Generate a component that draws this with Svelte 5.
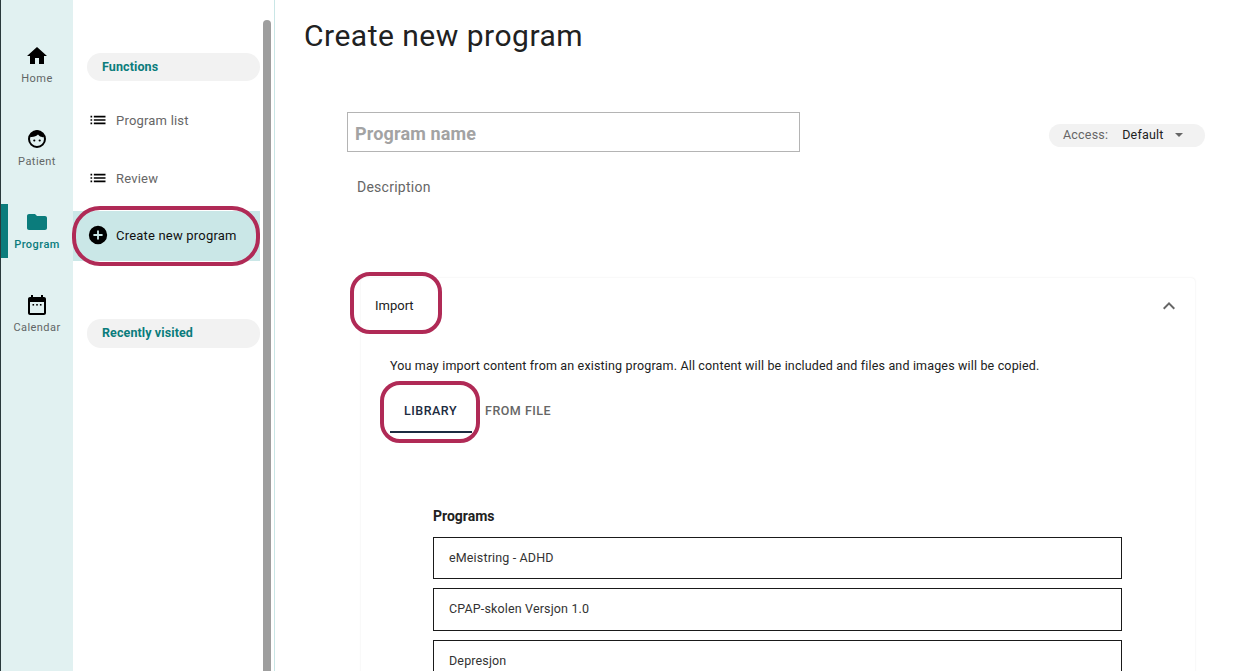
<script>
  const railItems = [
    { label: "Home", icon: "home" },
    { label: "Patient", icon: "face" },
    { label: "Program", icon: "folder", active: true },
    { label: "Calendar", icon: "calendar" }
  ];

  const programs = ["eMeistring - ADHD", "CPAP-skolen Versjon 1.0", "Depresjon"];
</script>

<div class="app">
  <nav class="rail">
    {#each railItems as item}
      <div class="rail-item" class:active={item.active}>
        <svg class="rail-icon" viewBox="0 0 24 24" width="24" height="24" fill="currentColor">
          {#if item.icon === "home"}
            <path d="M10 20v-6h4v6h5v-8h3L12 3 2 12h3v8z" />
          {:else if item.icon === "face"}
            <circle cx="12" cy="12" r="8" fill="none" stroke="currentColor" stroke-width="2" />
            <path d="M5 10C6 6 9 3.500 12 3.500s6 2.500 7 6.500c-2.500.5-4.500-.4-6-2.400C11.500 9.400 8 10.500 5 10z" />
            <circle cx="9.300" cy="13.500" r="1.100" />
            <circle cx="14.700" cy="13.500" r="1.100" />
          {:else if item.icon === "folder"}
            <path d="M10 4H4c-1.100 0-2 .9-2 2v12c0 1.100.9 2 2 2h16c1.100 0 2-.9 2-2V8c0-1.100-.9-2-2-2h-8z" />
          {:else}
            <path fill-rule="evenodd" d="M19 4h-1V2h-2v2H8V2H6v2H5c-1.100 0-2 .9-2 2v14c0 1.100.9 2 2 2h14c1.100 0 2-.9 2-2V6c0-1.100-.9-2-2-2zm0 16H5V9h14z" />
            <rect x="7.500" y="11" width="1.600" height="1.600" />
            <rect x="11.200" y="11" width="1.600" height="1.600" />
            <rect x="14.900" y="11" width="1.600" height="1.600" />
          {/if}
        </svg>
        <span>{item.label}</span>
      </div>
    {/each}
  </nav>

  <aside class="sidebar">
    <div class="pill-head">Functions</div>
    <div class="side-row first">
      <svg viewBox="0 0 24 24" width="20" height="20" fill="currentColor"><path d="M3 13h2v-2H3zm0 4h2v-2H3zm0-8h2V7H3zm4 4h14v-2H7zm0 4h14v-2H7zM7 7v2h14V7z" /></svg>
      <span>Program list</span>
    </div>
    <div class="side-row second">
      <svg viewBox="0 0 24 24" width="20" height="20" fill="currentColor"><path d="M3 13h2v-2H3zm0 4h2v-2H3zm0-8h2V7H3zm4 4h14v-2H7zm0 4h14v-2H7zM7 7v2h14V7z" /></svg>
      <span>Review</span>
    </div>
    <div class="side-row current">
      <svg viewBox="0 0 24 24" width="22" height="22" fill="currentColor"><path d="M12 2a10 10 0 1 0 0 20 10 10 0 0 0 0-20zm5 11h-4v4h-2v-4H7v-2h4V7h2v4h4z" /></svg>
      <span>Create new program</span>
    </div>
    <div class="pill-head recent">Recently visited</div>
    <div class="scrollbar"></div>
  </aside>

  <main class="main">
    <h1>Create new program</h1>

    <div class="form-top">
      <div class="name-input">Program name</div>
      <div class="access">
        <span class="access-label">Access:</span>
        <span class="access-value">Default</span>
        <span class="caret"></span>
      </div>
    </div>

    <div class="description">Description</div>

    <section class="card">
      <div class="card-head">
        <span class="card-title">Import</span>
        <svg viewBox="0 0 24 24" width="24" height="24" fill="#666"><path d="M12 8l-6 6 1.410 1.410L12 10.830l4.590 4.580L18 14z" /></svg>
      </div>
      <p class="hint">You may import content from an existing program. All content will be included and files and images will be copied.</p>
      <div class="tabs">
        <div class="tab selected">LIBRARY</div>
        <div class="tab">FROM FILE</div>
      </div>
      <div class="programs">
        <h2>Programs</h2>
        {#each programs as program}
          <div class="program-row">{program}</div>
        {/each}
      </div>
    </section>
  </main>

  <div class="mark mark-create"></div>
  <div class="mark mark-import"></div>
  <div class="mark mark-library"></div>
</div>

<style>
  :global(body) {
    margin: 0;
    background: #fff;
    overflow: hidden;
  }

  .app {
    position: relative;
    display: flex;
    height: 671px;
    overflow: hidden;
    font-family: Roboto, "Liberation Sans", sans-serif;
    color: #212121;
  }

  .rail {
    flex: 0 0 73px;
    box-sizing: border-box;
    padding: 38px 0 0 1px;
    display: flex;
    flex-direction: column;
    gap: 29px;
    background: #e1f1f1;
    border-left: 1px solid #2a3a3c;
  }

  .rail-item {
    height: 54px;
    box-sizing: border-box;
    margin: 0 7px 0 -1px;
    padding-bottom: 1px;
    display: flex;
    flex-direction: column;
    align-items: center;
    justify-content: center;
    gap: 4.500px;
    font-size: 11px;
    font-weight: 400;
    letter-spacing: 0.45px;
    color: #616666;
    border-left: 7px solid transparent;
  }

  .rail-icon {
    color: #000;
    display: block;
  }

  .rail-item.active {
    border-left-color: #0b7c7c;
    color: #0b7c7c;
    font-weight: 500;
  }

  .rail-item.active .rail-icon {
    color: #0b7c7c;
  }

  .sidebar {
    position: relative;
    flex: 0 0 202px;
    box-sizing: border-box;
    padding-top: 53px;
    border-right: 1px solid #c9e6e6;
  }

  .pill-head {
    margin-left: 14px;
    width: 173px;
    height: 28px;
    box-sizing: border-box;
    padding-left: 15px;
    line-height: 28px;
    border-radius: 14px;
    background: #f2f2f2;
    color: #0b7c7c;
    font-size: 12.500px;
    font-weight: 700;
    letter-spacing: 0.1px;
  }

  .pill-head.recent {
    margin-top: 58px;
    height: 29px;
    line-height: 28px;
  }

  .side-row {
    display: flex;
    align-items: center;
    gap: 8px;
    height: 50px;
    width: 187px;
    box-sizing: border-box;
    padding-left: 15px;
    font-size: 13px;
    letter-spacing: 0.2px;
    color: #666;
  }

  .side-row svg {
    color: #000;
    flex: none;
  }

  .side-row.first {
    margin-top: 14px;
  }

  .side-row.second {
    margin-top: 8px;
  }

  .side-row.current {
    margin-top: 8px;
    gap: 7px;
    padding: 0 0 2px 14px;
    background: #cae7e7;
    color: #111;
  }

  .scrollbar {
    position: absolute;
    left: 190px;
    top: 20px;
    bottom: 0;
    width: 8px;
    border-radius: 4px 4px 0 0;
    background: #9e9e9e;
  }

  .main {
    flex: 1;
    min-width: 0;
    box-sizing: border-box;
    padding-left: 29px;
  }

  h1 {
    margin: 0;
    padding-top: 18px;
    height: 112px;
    box-sizing: border-box;
    font-size: 30px;
    line-height: 36px;
    font-weight: 400;
    letter-spacing: 0.5px;
    color: #212121;
  }

  .form-top {
    display: flex;
    align-items: center;
    margin-left: 43px;
    width: 858px;
    justify-content: space-between;
  }

  .name-input {
    width: 453px;
    height: 40px;
    box-sizing: border-box;
    border: 1px solid #b4b4b4;
    padding-left: 7px;
    line-height: 42px;
    font-size: 18px;
    font-weight: 700;
    letter-spacing: 0.15px;
    color: #a3a3a3;
  }

  .access {
    display: flex;
    align-items: center;
    width: 156px;
    height: 23px;
    margin-top: 6px;
    box-sizing: border-box;
    padding: 0 0 1px 14px;
    border-radius: 12px;
    background: #f2f2f2;
    font-size: 12.500px;
    letter-spacing: 0.2px;
  }

  .access-label {
    color: #666;
    margin-right: 14px;
  }

  .access-value {
    color: #212121;
    margin-right: 11px;
  }

  .caret {
    width: 0;
    height: 0;
    border-left: 4.500px solid transparent;
    border-right: 4.500px solid transparent;
    border-top: 4.500px solid #666;
  }

  .description {
    margin: 26px 0 0 53px;
    height: 18px;
    line-height: 18px;
    font-size: 14px;
    letter-spacing: 0.25px;
    color: #666;
  }

  .card {
    box-sizing: border-box;
    width: 834px;
    height: 500px;
    margin: 82px 0 0 57px;
    border-radius: 4px;
    box-shadow: 0 0 2px rgba(0, 0, 0, 0.1);
  }

  .card-head {
    display: flex;
    align-items: center;
    justify-content: space-between;
    height: 56px;
    padding: 0 14px 0 14px;
    font-size: 13px;
    color: #212121;
  }

  .card-title {
    margin-bottom: 2px;
  }

  .hint {
    margin: 23px 0 0 29px;
    height: 18px;
    line-height: 17px;
    font-size: 12.500px;
    letter-spacing: 0.16px;
    color: #212121;
  }

  .tabs {
    display: flex;
    margin: 13px 0 0 29px;
  }

  .tab {
    box-sizing: border-box;
    height: 45px;
    line-height: 45px;
    padding: 0 14px 0 0;
    font-size: 12.500px;
    font-weight: 500;
    letter-spacing: 0.5px;
    color: #666;
  }

  .tab.selected {
    width: 82px;
    padding: 0 1px 0 0;
    margin-right: 13px;
    text-align: center;
    color: #1c2b40;
    border-bottom: 2px solid #1c2b40;
  }

  .programs {
    margin: 74px 0 0 72px;
    width: 689px;
  }

  h2 {
    margin: 0 0 12px;
    height: 18px;
    line-height: 18px;
    font-size: 14px;
    font-weight: 700;
    color: #212121;
  }

  .program-row {
    box-sizing: border-box;
    height: 43px;
    margin-bottom: 9px;
    padding: 0 0 2px 15px;
    display: flex;
    align-items: center;
    border: 1px solid #1a1a1a;
    font-size: 12.500px;
    letter-spacing: 0.15px;
    color: #333;
  }

  .program-row:first-of-type {
    height: 42px;
  }

  .mark {
    position: absolute;
    box-sizing: border-box;
    border: 4px solid #b02a56;
    pointer-events: none;
  }

  .mark-create {
    left: 72px;
    top: 206px;
    width: 188px;
    height: 60px;
    border-radius: 28px;
  }

  .mark-import {
    left: 350px;
    top: 272px;
    width: 92px;
    height: 62px;
    border-radius: 20px;
  }

  .mark-library {
    left: 380px;
    top: 381px;
    width: 100px;
    height: 62px;
    border-radius: 20px;
  }
</style>
